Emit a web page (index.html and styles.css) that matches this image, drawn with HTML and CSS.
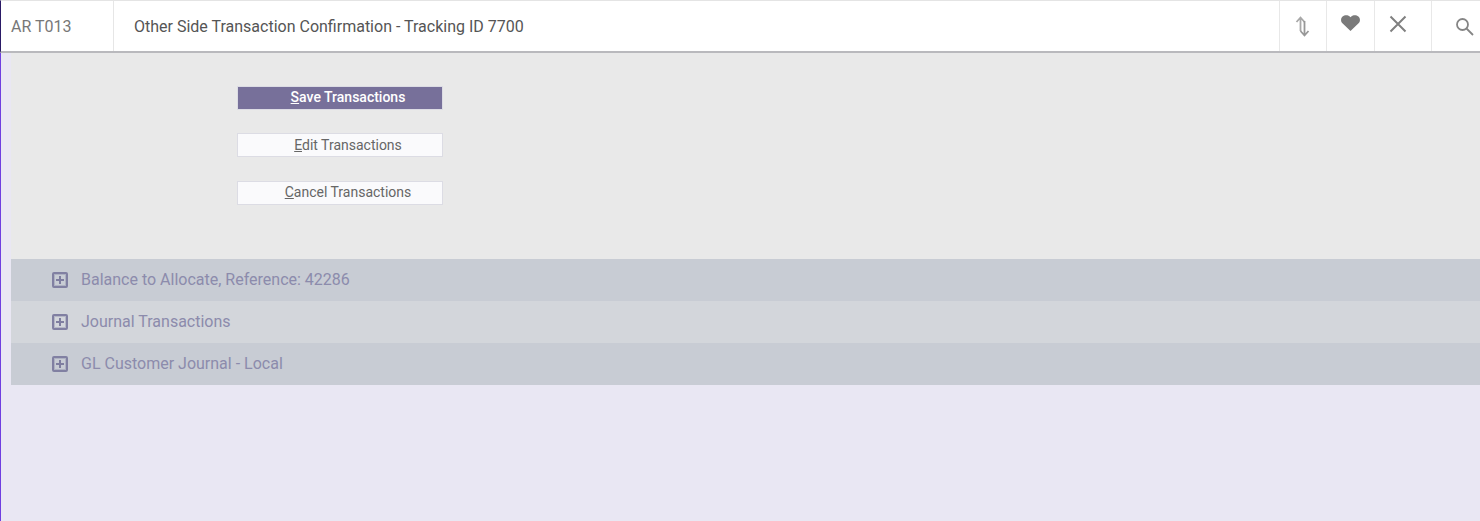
FILE: index.html
```html
<!DOCTYPE html>
<html lang="en">

<head>
	<meta charset="UTF-8">
	<title>AR T013</title>
	<link rel="stylesheet" href="styles.css">
</head>

<body>
	<div class="page">
		<header class="topbar">
			<div class="screen-code">AR T013</div>
			<div class="screen-title">Other Side Transaction Confirmation - Tracking ID 7700</div>
			<div class="tool tool-swap">
				<svg width="16" height="22" viewBox="0 0 16 22" fill="none" stroke-width="1.800">
					<path d="M5.500 16V3M1.500 7 5.500 2.500l4 4.500" stroke="#a8a8a8" />
					<path d="M9.500 6v14M5.500 16l4 4.500 4-4.500" stroke="#989898" />
				</svg>
			</div>
			<div class="tool tool-heart">
				<svg width="19" height="16" viewBox="0 0 18 16" preserveAspectRatio="none">
					<path fill="#7a7a7a" d="M9 16 1.600 8.600C-.5 6.500-.4 3.300 1.500 1.500 3.400-.3 6.500-.3 8.300 1.500L9 2.300l.7-.8c1.800-1.800 4.900-1.800 6.800 0 1.900 1.800 2 5-.1 7.100z" />
				</svg>
			</div>
			<div class="tool tool-close">
				<svg width="18" height="18" viewBox="0 0 18 18" stroke="#808080" stroke-width="2">
					<path d="M1.500 1.500l15 15M16.500 1.500l-15 15" />
				</svg>
			</div>
			<div class="tool tool-search">
				<svg width="19" height="19" viewBox="0 0 19 19" fill="none" stroke="#858585" stroke-width="1.800">
					<circle cx="7.500" cy="7.500" r="5.500" />
					<path d="M11.500 11.500l6.500 6.500" />
				</svg>
			</div>
		</header>

		<section class="actions">
			<button class="action action-primary"><u>S</u>ave Transactions</button>
			<button class="action action-edit"><u>E</u>dit Transactions</button>
			<button class="action"><u>C</u>ancel Transactions</button>
		</section>

		<section class="groups">
			<div class="group">
				<span class="plus"></span>
				<span class="group-label">Balance to Allocate, Reference: 42286</span>
			</div>
			<div class="group group-alt">
				<span class="plus"></span>
				<span class="group-label">Journal Transactions</span>
			</div>
			<div class="group">
				<span class="plus"></span>
				<span class="group-label">GL Customer Journal - Local</span>
			</div>
		</section>
	</div>
</body>

</html>
```

FILE: styles.css
```css
html,
body {
	margin: 0;
	height: 100%;
	overflow: hidden;
}

body {
	font-family: Roboto, "Liberation Sans", sans-serif;
	background-color: #e9e7f3;
}

.page {
	height: 521px;
	box-sizing: border-box;
	border-left: 1px solid #6f3fe0;
	background-color: #e9e7f3;
}

.topbar {
	display: flex;
	height: 53px;
	box-sizing: border-box;
	margin-left: -1px;
	background-color: #fff;
	border-top: 1px solid #e4e4e4;
	border-bottom: 2px solid #b9b9bd;
	border-left: 1px solid #2a1a66;
}

.screen-code {
	width: 113px;
	padding-left: 10px;
	box-sizing: border-box;
	border-right: 1px solid #e6e6e6;
	font-size: 16px;
	line-height: 52px;
	color: #777;
}

.screen-title {
	flex: 1;
	padding-left: 20px;
	font-size: 16px;
	line-height: 52px;
	color: #555;
}

.tool {
	display: flex;
	align-items: center;
	justify-content: center;
	box-sizing: border-box;
	border-left: 1px solid #e8e8e8;
}

.tool-swap {
	width: 47px;
}

.tool-heart {
	width: 48px;
	padding: 0 1px 6px 0;
}

.tool-close {
	width: 57px;
	padding: 0 10px 4px 0;
}

.tool-search {
	width: 49px;
	padding-left: 17px;
}

.actions {
	display: flex;
	flex-direction: column;
	align-items: flex-start;
	gap: 23.400px;
	height: 206px;
	box-sizing: border-box;
	margin-left: 10px;
	padding: 33px 0 0 226px;
	background-color: #e9e9e9;
}

.action {
	width: 206px;
	height: 24px;
	padding: 0 0 2px 16px;
	box-sizing: border-box;
	background-color: #fafafc;
	border: 1px solid #dcdce4;
	font-family: inherit;
	font-size: 14px;
	color: #666;
}

.action-edit {
	padding-bottom: 0;
}

.action-primary {
	background-color: #77709a;
	font-weight: 500;
	color: #fff;
}

.groups {
	margin-left: 10px;
}

.group {
	display: flex;
	align-items: center;
	gap: 13px;
	height: 42px;
	padding-left: 41px;
	background-color: #c8ccd4;
	font-size: 16px;
	color: #8c8bac;
}

.group-alt {
	background-color: #d3d6db;
}

.group-label {
	padding-bottom: 2px;
}

.plus {
	position: relative;
	width: 16px;
	height: 16px;
	box-sizing: border-box;
	border: 2px solid #8180a2;
	border-radius: 2px;
	box-shadow: inset 0 0 0 1px rgba(127, 126, 160, 0.35);
}

.plus::before,
.plus::after {
	content: "";
	position: absolute;
	background-color: #7f7ea0;
}

.plus::before {
	left: 2px;
	top: 5px;
	width: 8px;
	height: 2px;
}

.plus::after {
	left: 5px;
	top: 2px;
	width: 2px;
	height: 8px;
}
```
